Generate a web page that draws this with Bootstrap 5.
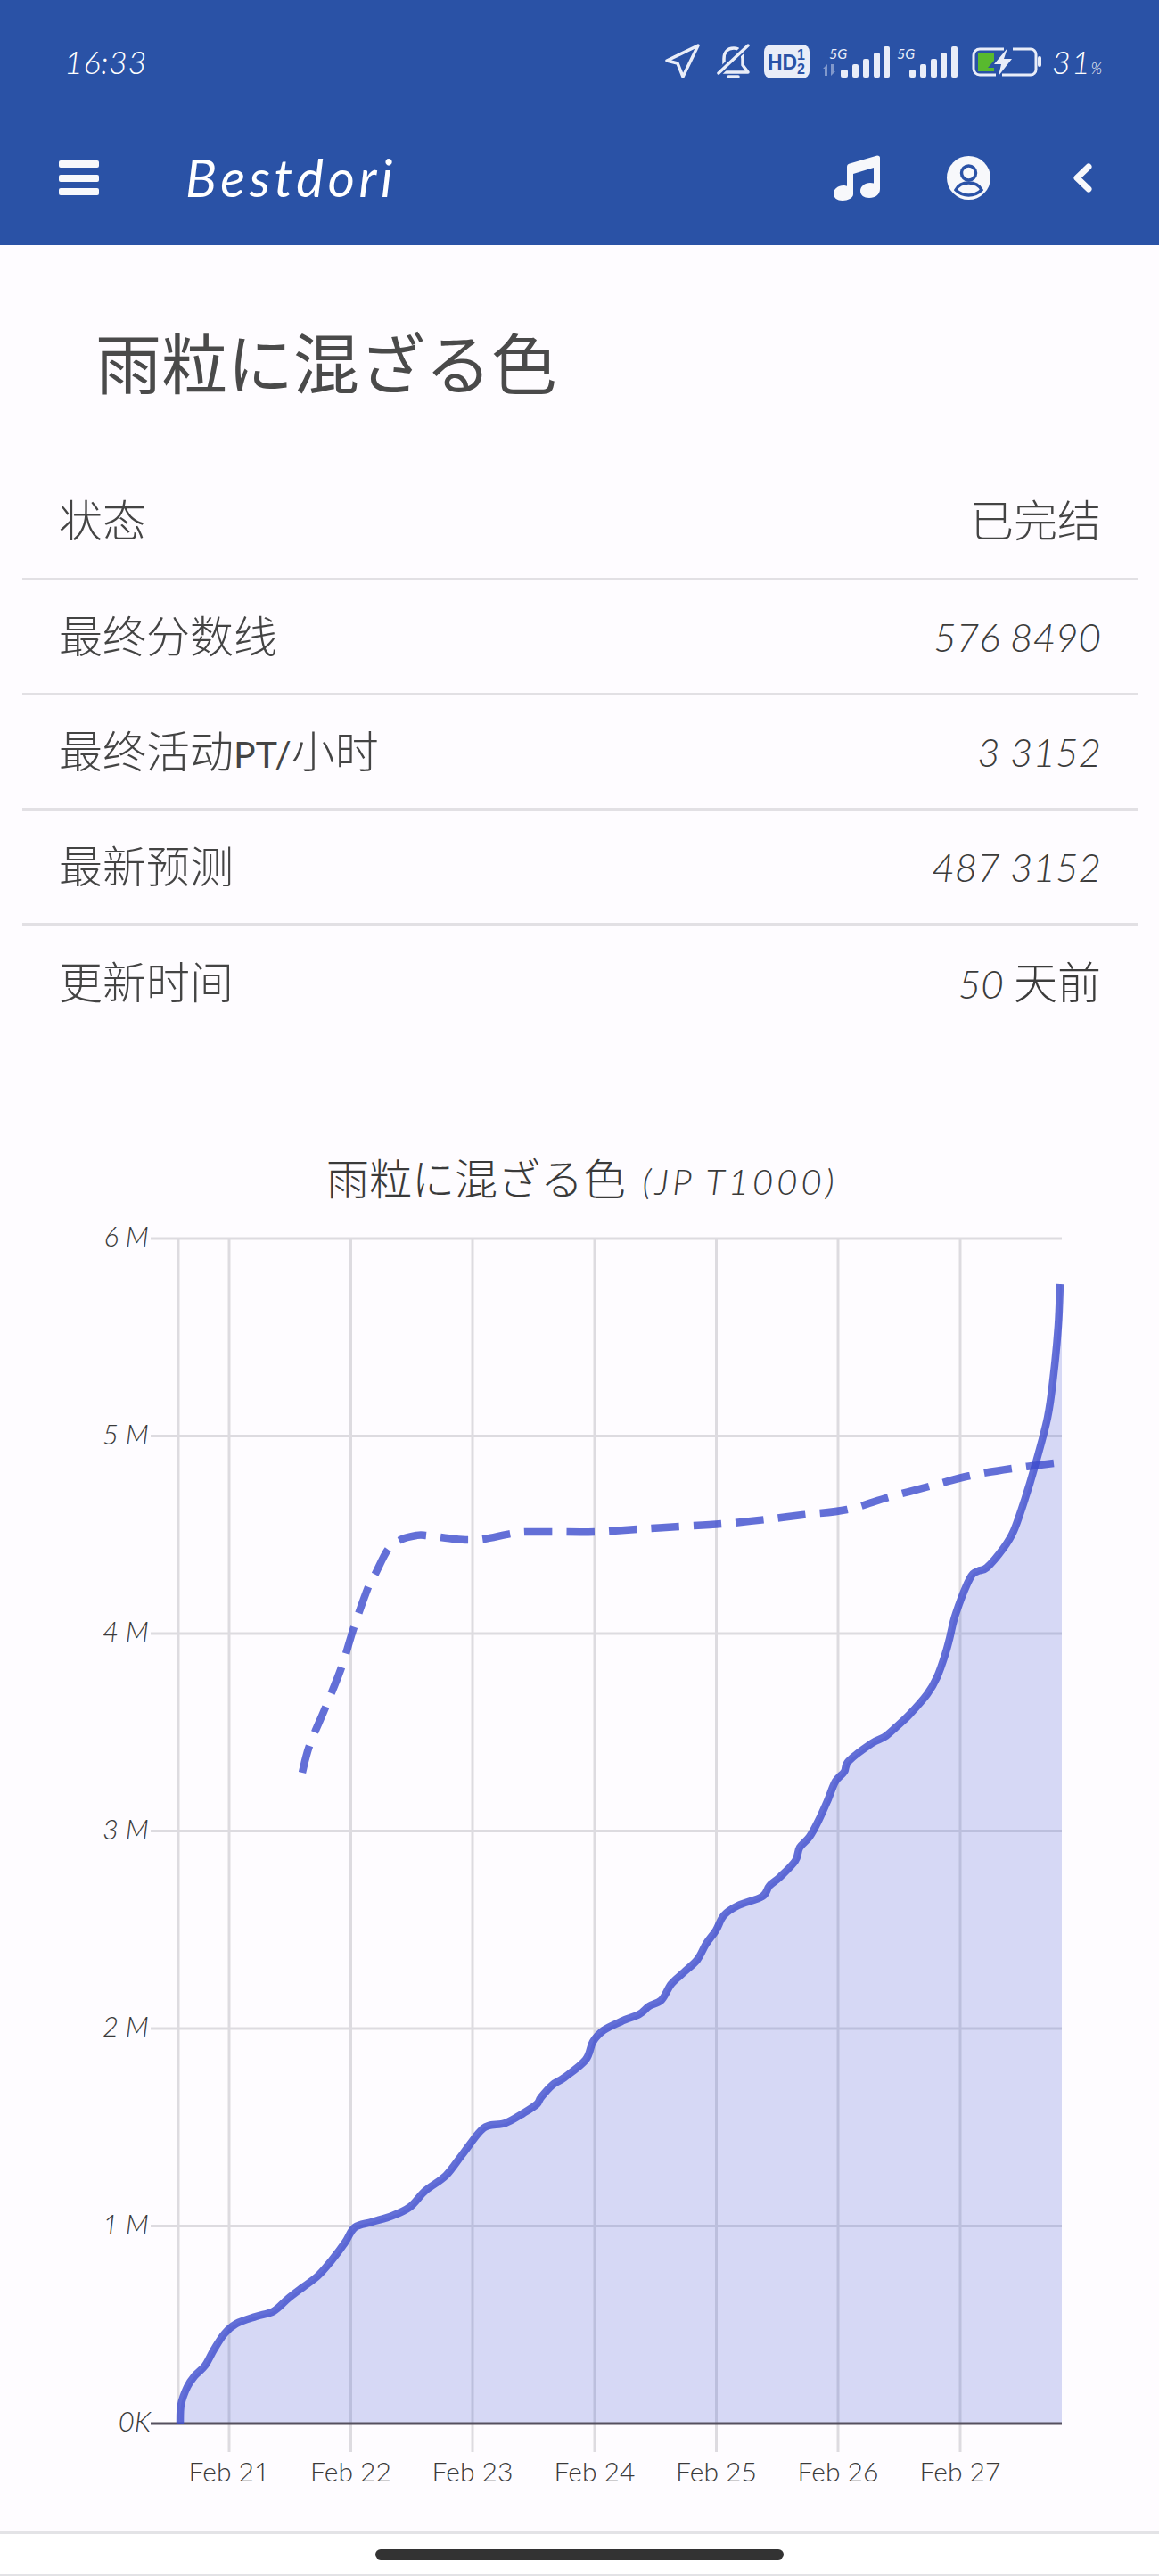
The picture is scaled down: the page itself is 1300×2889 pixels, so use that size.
<!DOCTYPE html>
<html lang="en">
<head>
    <meta charset="UTF-8">
    <title>Bestdori</title>
    <link href="https://cdn.jsdelivr.net/npm/bootstrap@5.3.0/dist/css/bootstrap.min.css" rel="stylesheet">
    <style>
        body { background: #fefcff; font-family: "Lato", "Noto Sans CJK SC", sans-serif; color: #4a4a4a; }
        .app-head { background: #2a52a6; height: 275px; color: #f7f8fb; }
        .status-row { height: 131px; padding: 7px 67px 0 72px; }
        .status-time { font-size: 36px; font-weight: 300; font-style: italic; letter-spacing: .5px; color: #fff; }
        .status-icons { gap: 15px; }
        .status-batt { width: 53px; font-size: 36px; font-weight: 300; font-style: italic; letter-spacing: 1px; color: #fff; white-space: nowrap; margin-left: -3px; }
        .status-batt small { font-size: 17px; letter-spacing: 0; }
        .top-nav { height: 144px; padding: 0 75px 8px 66px; flex-wrap: nowrap; }
        .brand-name { font-size: 58px; font-weight: 400; font-style: italic; letter-spacing: 4.7px; color: #fff; margin-left: 97px; padding: 0; line-height: 1; }
        .top-actions { gap: 75px; }
        .back-chevron { margin-left: 17px; }
        .page-title { font-family: "Noto Sans CJK JP", sans-serif; font-size: 74px; font-weight: 400; line-height: 66px; color: #4a4a4a; margin: 0; padding: 96px 0 83px 107px; }
        .stat-wrap { padding: 0 23px 0 25px; }
        .stat-table { --bs-table-bg: transparent; --bs-table-color: #444; margin: 0; }
        .stat-table td { height: 129px; padding: 0 42px 0 41px; font-size: 49px; font-weight: 300; vertical-align: middle; border-bottom: 3px solid #e2e0e4; line-height: 1; }
        .stat-table tr:last-child td { border-bottom: 0; }
        .stat-table .num { font-size: 44px; font-style: italic; text-align: right; color: #3c3c3c; }
        .stat-table .num .cjk { font-size: 49px; font-style: normal; }
        .stat-table .word { text-align: right; }
        .lat-narrow { font-size: 41px; font-weight: 400; }
        .chart-svg { display: block; width: 1300px; height: 1674px; }
        .chart-svg text { fill: #3a3a3a; font-weight: 300; }
        .chart-title { font-size: 48px; font-family: "Noto Sans CJK JP", "Lato", sans-serif; }
        .chart-title tspan { font-size: 40px; font-family: "Lato", sans-serif; letter-spacing: 4px; font-style: italic; }
        .tick-y { font-size: 31px; font-style: italic; }
        .tick-x { font-size: 30px; }
        .gest-bar { height: 50px; background: #fff; border-top: 3px solid #e3e3e6; border-bottom: 2px solid #e3e3e6; }
        .gest-pill { width: 458px; height: 12px; background: #333; border-radius: 6px; }
    </style>
</head>
<body>
<header class="app-head">
    <div class="status-row d-flex align-items-center justify-content-between">
        <span class="status-time">16:33</span>
        <div class="status-icons d-flex align-items-center">
            <svg width="43" height="40" viewBox="0 0 43 40" fill="none" stroke="#e9edf8" stroke-width="3.5" stroke-linejoin="round"><path d="M38 2 3 19l12 3 6 15z"/></svg>
            <svg width="39" height="40" viewBox="0 0 39 40" fill="none" stroke-linecap="round">
                <path d="M20 5C12 5 9 11 9 17v7L3 32h33l-6-8v-7C30 11 27 5 20 5z" stroke="#e9edf8" stroke-width="3.5" stroke-linejoin="round"/>
                <path d="M36 1 3 33" stroke="#2a52a6" stroke-width="8"/>
                <path d="M36 2 3 33" stroke="#e9edf8" stroke-width="3.5"/>
                <path d="M14 37h11" stroke="#e9edf8" stroke-width="3.5"/>
            </svg>
            <svg width="51" height="38" viewBox="0 0 51 38">
                <rect width="51" height="38" rx="8" fill="#e9edf8"/>
                <text x="4" y="28" font-family="Liberation Sans" font-weight="700" font-size="23" fill="#2a52a6">HD</text>
                <text x="37" y="17" font-family="Liberation Sans" font-weight="700" font-size="16" fill="#2a52a6">1</text>
                <text x="37" y="33" font-family="Liberation Sans" font-weight="700" font-size="16" fill="#2a52a6">2</text>
            </svg>
            <svg width="152" height="40" viewBox="0 0 152 40" fill="#e9edf8">
                <text x="7" y="17" font-size="16" font-style="italic" font-family="Lato">5G</text>
                <path d="M5 23v13H2v-8H0zM9 36V23h3v8h2z" opacity=".45"/>
                <rect x="20" y="29" width="8" height="9" rx="2"/><rect x="33" y="23" width="7" height="15" rx="2"/><rect x="45" y="17" width="7" height="21" rx="2"/><rect x="57" y="10" width="7" height="28" rx="2"/><rect x="68" y="3" width="7" height="35" rx="2"/>
                <text x="83" y="17" font-size="16" font-style="italic" font-family="Lato">5G</text>
                <rect x="97" y="29" width="7" height="9" rx="2"/><rect x="109" y="23" width="7" height="15" rx="2"/><rect x="121" y="17" width="7" height="21" rx="2"/><rect x="132" y="10" width="7" height="28" rx="2"/><rect x="144" y="3" width="7" height="35" rx="2"/>
            </svg>
            <svg width="78" height="33" viewBox="0 0 78 33" fill="none">
                <path d="M36 2H9a7 7 0 0 0-7 7v15a7 7 0 0 0 7 7h18M46 2h20a6 6 0 0 1 6 6v17a6 6 0 0 1-6 6H34" stroke="#e9edf8" stroke-width="3"/>
                <path d="M7 6h18v9l-7 8h7v4H7z" fill="#58b92e"/>
                <path d="M40 1 25 19h8l-3 13 15-19h-9z" fill="#e9edf8"/>
                <rect x="74" y="10" width="4" height="12" rx="2" fill="#e9edf8"/>
            </svg>
            <span class="status-batt">31<small>%</small></span>
        </div>
    </div>
    <nav class="navbar top-nav">
        <div class="d-flex align-items-center">
            <svg width="45" height="39" viewBox="0 0 45 39" fill="#f7f8fb"><rect width="45" height="8" rx="2"/><rect y="16" width="45" height="8" rx="2"/><rect y="31" width="45" height="8" rx="2"/></svg>
            <a class="navbar-brand brand-name" href="#">Bestdori</a>
        </div>
        <div class="top-actions d-flex align-items-center">
            <svg width="52" height="51" viewBox="0 0 52 51" fill="#f7f8fb"><path d="M49 .5c2 0 3 1 3 2.500V38c0 6-5 10-12 10-6 0-10-3-10-8s5-9 11-9c1.500 0 3 .2 4 .6V14l-23 7v23c0 4-6 7-12 7-6 0-10-3-10-8s5-9 11-9c1.500 0 3 .3 4 .7V13c0-2 1-3 3-3.500z"/></svg>
            <svg width="49" height="49" viewBox="0 0 49 49">
                <circle cx="24.500" cy="24.500" r="24.500" fill="#f7f8fb"/>
                <circle cx="24.500" cy="19" r="8" fill="#f7f8fb" stroke="#2a52a6" stroke-width="3.500"/>
                <path d="M10 38c3-6 8-8 14.500-8S36 32 39 38c-4 4-9 6-14.500 6S14 42 10 38z" fill="#f7f8fb" stroke="#2a52a6" stroke-width="3.500"/>
            </svg>
            <svg class="back-chevron" width="22" height="33" viewBox="0 0 22 33" fill="none" stroke="#f7f8fb" stroke-width="7" stroke-linecap="round" stroke-linejoin="round"><path d="M18 4 5 16.500 18 29"/></svg>
        </div>
    </nav>
</header>

<main>
    <h1 class="page-title">雨粒に混ざる色</h1>
    <div class="stat-wrap">
        <table class="table stat-table">
            <tbody>
                <tr><td>状态</td><td class="word">已完结</td></tr>
                <tr><td>最终分数线</td><td class="num">576 8490</td></tr>
                <tr><td>最终活动<span class="lat-narrow">PT/</span>小时</td><td class="num">3 3152</td></tr>
                <tr><td>最新预测</td><td class="num">487 3152</td></tr>
                <tr><td>更新时间</td><td class="num">50 <span class="cjk">天前</span></td></tr>
            </tbody>
        </table>
    </div>
    <svg class="chart-svg" id="chart" viewBox="0 1165 1300 1674"></svg>
</main>

<footer class="gest-bar d-flex justify-content-center align-items-center">
    <div class="gest-pill"></div>
</footer>

<script>
    const X0 = 200, X1 = 1191, Y0 = 2718, YTOP = 1389;
    const feb = [257, 393.5, 530, 667, 803.5, 940, 1077];
    const stepY = (Y0 - YTOP) / 6;

    const actual = [[202,2718],[203,2697],[210,2677],[218,2665],[230,2653],[240,2635],[252,2617],[265,2606],[287,2598],[307,2592],[323,2578],[340,2565],[357,2552],[372,2535],[387,2515],[398,2498],[417,2492],[440,2485],[460,2475],[477,2457],[500,2440],[518,2417],[537,2392],[548,2384],[567,2381],[587,2370],[602,2360],[607,2352],[620,2338],[633,2330],[657,2310],[665,2290],[677,2277],[697,2267],[717,2259],[728,2250],[742,2243],[753,2225],[767,2212],[782,2198],[792,2180],[803,2165],[812,2148],[828,2137],[855,2127],[863,2115],[875,2105],[892,2087],[897,2072],[908,2060],[918,2042],[928,2020],[937,1998],[947,1987],[952,1975],[978,1955],[992,1948],[1005,1937],[1020,1923],[1040,1900],[1051,1881],[1060,1856],[1065,1838],[1072,1810],[1088,1770],[1097,1762],[1107,1758],[1125,1737],[1137,1717],[1150,1680],[1160,1647],[1175,1590],[1182,1540],[1187,1487],[1189,1440]];
    const predicted = [[339,1988],[347,1958],[365,1915],[383,1870],[397,1825],[413,1780],[421,1765],[435,1738],[449,1727],[467,1722],[478,1722],[510,1726],[526,1727],[543,1726],[573,1720],[590,1718],[620,1718],[668,1718],[715,1715],[763,1712],[810,1709],[860,1704],[900,1699],[950,1693],[997,1679],[1042,1667],[1088,1655],[1135,1647],[1182,1641]];

    // catmull-rom so the traced points don't look like a polyline
    const smooth = pts => {
        let d = `M${pts[0][0]} ${pts[0][1]}`;
        for (let i = 0; i < pts.length - 1; i++) {
            const a = pts[i - 1] || pts[i], b = pts[i], c = pts[i + 1], e = pts[i + 2] || c;
            const c1 = [b[0] + (c[0] - a[0]) / 6, b[1] + (c[1] - a[1]) / 6];
            const c2 = [c[0] - (e[0] - b[0]) / 6, c[1] - (e[1] - b[1]) / 6];
            d += `C${c1[0].toFixed(1)} ${c1[1].toFixed(1)} ${c2[0].toFixed(1)} ${c2[1].toFixed(1)} ${c[0]} ${c[1]}`;
        }
        return d;
    };

    let html = `<defs><clipPath id="plot"><rect x="${X0}" y="${YTOP}" width="${X1 - X0}" height="${Y0 - YTOP}"/></clipPath></defs>`;
    html += `<text class="chart-title" x="366" y="1340">雨粒に混ざる色 <tspan dx="8">(JP T1000)</tspan></text>`;

    for (let i = 0; i < 6; i++) {
        const y = YTOP + i * stepY;
        html += `<line x1="169" x2="${X1}" y1="${y}" y2="${y}" stroke="#dddbe0" stroke-width="3"/>`;
        html += `<text class="tick-y" x="167" y="${y + 9}" text-anchor="end">${6 - i} M</text>`;
    }
    html += `<text class="tick-y" x="169" y="${Y0 + 9}" text-anchor="end">0K</text>`;
    html += `<line x1="${X0}" x2="${X0}" y1="${YTOP}" y2="${Y0}" stroke="#dddbe0" stroke-width="3"/>`;
    feb.forEach((x, i) => {
        html += `<line x1="${x}" x2="${x}" y1="${YTOP}" y2="2750" stroke="#dddbe0" stroke-width="3"/>`;
        html += `<text class="tick-x" x="${x}" y="2783" text-anchor="middle">Feb ${21 + i}</text>`;
    });

    html += `<g clip-path="url(#plot)"><path d="${smooth(actual)}L${X1} 1440L${X1} ${Y0}Z" fill="rgba(74,90,210,.22)"/></g>`;
    html += `<line x1="169" x2="${X1}" y1="${Y0}" y2="${Y0}" stroke="#55505f" stroke-width="3"/>`;
    html += `<path d="${smooth(actual)}" fill="none" stroke="rgba(60,75,205,.8)" stroke-width="8.5" stroke-linejoin="round"/>`;
    html += `<path d="${smooth(predicted)}" fill="none" stroke="rgba(60,75,205,.8)" stroke-width="8.5" stroke-dasharray="31.3 16.2"/>`;

    document.getElementById("chart").innerHTML = html;
</script>
<script src="https://cdn.jsdelivr.net/npm/bootstrap@5.3.0/dist/js/bootstrap.bundle.min.js"></script>
</body>
</html>
